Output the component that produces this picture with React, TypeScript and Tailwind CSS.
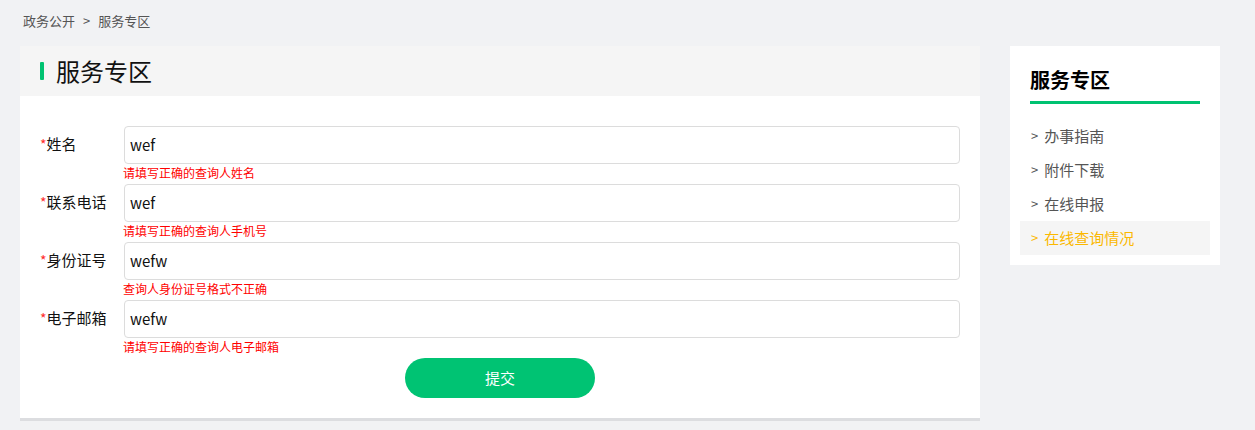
import React from "react";

const fields = [
  { label: "姓名", value: "wef", err: "请填写正确的查询人姓名" },
  { label: "联系电话", value: "wef", err: "请填写正确的查询人手机号" },
  { label: "身份证号", value: "wefw", err: "查询人身份证号格式不正确" },
  { label: "电子邮箱", value: "wefw", err: "请填写正确的查询人电子邮箱" },
];

const menu = ["办事指南", "附件下载", "在线申报", "在线查询情况"];

export default function App() {
  return (
    <div
      className="w-[1255px] h-[430px] bg-[#f1f2f4] overflow-hidden"
      style={{ fontFamily: '"Microsoft YaHei", "Noto Sans CJK SC", sans-serif' }}
    >
      <div className="pl-[23px] pt-[11px] h-[46px] text-[13px] leading-[20px] text-[#555]">
        政务公开<span className="mx-[8px]">&gt;</span>服务专区
      </div>
      <div className="flex pl-[20px] gap-[30px] items-start">
        <div className="w-[960px] bg-white border-b-[3px] border-[#dcdde0]">
          <div className="h-[50px] bg-[#f5f5f5] flex items-center pl-[20px]">
            <div className="w-[4px] h-[18px] bg-[#00c271] rounded-[1px] mr-[12px]" />
            <div className="text-[24px] leading-[30px] text-[#111]">服务专区</div>
          </div>
          <div className="pt-[30px] pb-[20px]">
            {fields.map((f) => (
              <div key={f.label} className="flex pl-[20px] pr-[20px] h-[58px]">
                <div className="w-[84px] text-[15px] leading-[36px] text-[#111]">
                  <span className="text-[#ff2b2b] text-[14px]">*</span>
                  {f.label}
                </div>
                <div className="flex-1">
                  <div className="h-[38px] border border-[#dcdcdc] rounded-[4px] flex items-center pl-[5px] text-[15px] text-[#111]">
                    {f.value}
                  </div>
                  <div className="text-[12px] leading-[18px] text-[#ff0000] -ml-[1px]">{f.err}</div>
                </div>
              </div>
            ))}
            <div className="flex justify-center">
              <button className="w-[190px] h-[40px] rounded-full bg-[#00c373] text-white text-[15px]">
                提交
              </button>
            </div>
          </div>
        </div>
        <div className="w-[210px] bg-white px-[10px] pt-[18px] pb-[10px]">
          <div className="mx-[10px] border-b-[3px] border-[#00c271] pb-[5px] text-[20px] leading-[32px] font-bold text-black">
            服务专区
          </div>
          <div className="mt-[15px]">
            {menu.map((m, i) => (
              <div
                key={m}
                className={
                  "h-[34px] flex items-center pl-[10px] text-[15px] " +
                  (i === 3 ? "bg-[#f5f5f5] text-[#fbb800]" : "text-[#555]")
                }
              >
                <span className="text-[13px] mr-[6px] ml-[1px]">&gt;</span>
                {m}
              </div>
            ))}
          </div>
        </div>
      </div>
    </div>
  );
}
